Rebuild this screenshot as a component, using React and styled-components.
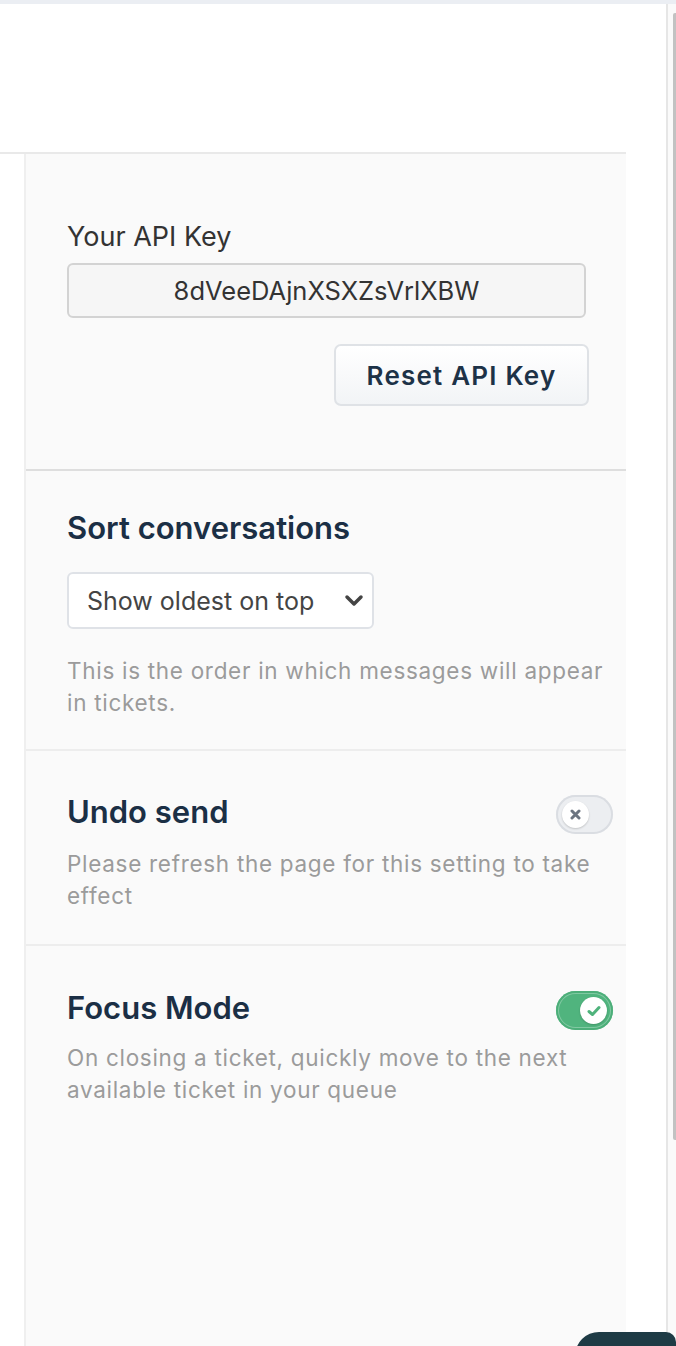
import React from "react";
import styled, { createGlobalStyle } from "styled-components";

const GlobalStyle = createGlobalStyle`
  html, body { margin: 0; padding: 0; background: #fff; }
  body { font-family: Inter, "Noto Sans", "Liberation Sans", sans-serif; -webkit-font-smoothing: antialiased; }
  * { box-sizing: border-box; }
`;

const Page = styled.div`
  position: relative;
  width: 676px;
  height: 1346px;
  display: flex;
  flex-direction: column;
  overflow: hidden;
  background: #fff;
`;

const TopStrip = styled.div`
  height: 4px;
  flex-shrink: 0;
  background: #ebeef3;
`;

const Body = styled.div`
  flex: 1;
  display: flex;
  min-height: 0;
`;

const Main = styled.div`
  width: 666px;
  display: flex;
  flex-direction: column;
`;

const Header = styled.div`
  height: 148px;
  flex-shrink: 0;
  background: #fff;
`;

const Content = styled.div`
  width: 626px;
  flex: 1;
  display: flex;
  padding-left: 24px;
  border-top: 2px solid #e9e9e9;
`;

const Panel = styled.div`
  flex: 1;
  display: flex;
  flex-direction: column;
  background: #fafafa;
  border-left: 2px solid #efefef;
`;

const Section = styled.section`
  padding: ${(p) => p.$top}px 13px ${(p) => p.$bottom}px 41px;
  border-bottom: ${(p) => (p.$last ? "none" : `2px solid ${p.$line || "#ededed"}`)};
`;

const Label = styled.div`
  font-size: 27px;
  line-height: 32px;
  color: #333;
`;

const KeyField = styled.div`
  margin-top: 10px;
  width: 519px;
  height: 55px;
  display: flex;
  align-items: center;
  justify-content: center;
  background: #f6f6f6;
  border: 2px solid #d3d3d3;
  border-radius: 6px;
  font-size: 25.5px;
  color: #333;
`;

const ButtonRow = styled.div`
  width: 522px;
  margin-top: 26px;
  display: flex;
  justify-content: flex-end;
`;

const Button = styled.button`
  width: 255px;
  height: 62px;
  border: 2px solid #dfe2e6;
  border-radius: 7px;
  background: linear-gradient(#ffffff, #f2f4f6);
  font-family: inherit;
  font-size: 26px;
  font-weight: 600;
  letter-spacing: 1.2px;
  color: #1d3247;
  padding: 0;
`;

const Heading = styled.h2`
  margin: 0;
  font-size: 31px;
  line-height: 38px;
  font-weight: 600;
  color: #1b2f45;
`;

const SelectBox = styled.div`
  margin-top: 25px;
  width: 307px;
  height: 57px;
  display: flex;
  align-items: center;
  justify-content: space-between;
  padding: 0 8px 0 18px;
  background: #fff;
  border: 2px solid #dfe2e7;
  border-radius: 6px;
  font-size: 25px;
  color: #444;
`;

const Help = styled.p`
  margin: ${(p) => p.$gap}px 0 0;
  max-width: 546px;
  font-size: 22.5px;
  line-height: 32px;
  letter-spacing: 0.7px;
  color: #9b9b9b;
`;

const ToggleRow = styled.div`
  display: flex;
  justify-content: space-between;
  align-items: flex-start;
`;

const Track = styled.div`
  margin-top: 2px;
  width: 57px;
  height: 39px;
  border-radius: 20px;
  display: flex;
  align-items: center;
  justify-content: ${(p) => (p.$on ? "flex-end" : "flex-start")};
  padding: 0 6px;
  background: ${(p) => (p.$on ? "#50b47e" : "#eceef1")};
  box-shadow: ${(p) =>
    p.$on
      ? "inset 0 0 0 2px #4cae79, inset 0 0 0 3px rgba(255,255,255,0.28)"
      : "inset 0 0 0 2px #dadde2"};
`;

const Knob = styled.div`
  width: 27px;
  height: 27px;
  border-radius: 50%;
  background: #fff;
  display: flex;
  align-items: center;
  justify-content: center;
  box-shadow: 0 1px 2px rgba(0, 0, 0, 0.18);
`;

const ScrollTrack = styled.div`
  width: 10px;
  display: flex;
  justify-content: flex-end;
  padding-top: 9px;
  background: #fafafa;
  border-left: 2px solid #e6e6e6;
`;

const Thumb = styled.div`
  width: 3px;
  height: 1127px;
  border-radius: 2px 0 0 2px;
  background: #c2c2c2;
`;

const Launcher = styled.div`
  position: absolute;
  left: 575px;
  top: 1332px;
  width: 101px;
  height: 40px;
  border-radius: 24px 10px 0 0;
  background: #1e3b45;
`;

const Toggle = ({ on }) => (
  <Track $on={on}>
    <Knob>
      {on ? (
        <svg width="14" height="12" viewBox="0 0 14 12">
          <path d="M2 6.5 L5.5 9.5 L12 2.5" fill="none" stroke="#4fb37c" strokeWidth="3" strokeLinecap="round" strokeLinejoin="round" />
        </svg>
      ) : (
        <svg width="11" height="11" viewBox="0 0 11 11">
          <path d="M2 2 L9 9 M9 2 L2 9" fill="none" stroke="#6b7480" strokeWidth="3" strokeLinecap="round" />
        </svg>
      )}
    </Knob>
  </Track>
);

export default function App() {
  return (
    <>
      <GlobalStyle />
      <Page>
        <TopStrip />
        <Body>
          <Main>
            <Header />
            <Content>
              <Panel>
                <Section $top={67} $bottom={63} $line="#dedede">
                  <Label>Your API Key</Label>
                  <KeyField>8dVeeDAjnXSXZsVrlXBW</KeyField>
                  <ButtonRow>
                    <Button>Reset API Key</Button>
                  </ButtonRow>
                </Section>
                <Section $top={38} $bottom={30}>
                  <Heading>Sort conversations</Heading>
                  <SelectBox>
                    <span>Show oldest on top</span>
                    <svg width="20" height="14" viewBox="0 0 20 14">
                      <path d="M3 3 L10 10 L17 3" fill="none" stroke="#444" strokeWidth="3.5" strokeLinecap="round" strokeLinejoin="round" />
                    </svg>
                  </SelectBox>
                  <Help $gap={26}>This is the order in which messages will appear in tickets.</Help>
                </Section>
                <Section $top={42} $bottom={32}>
                  <ToggleRow>
                    <Heading>Undo send</Heading>
                    <Toggle on={false} />
                  </ToggleRow>
                  <Help $gap={14}>Please refresh the page for this setting to take effect</Help>
                </Section>
                <Section $top={43} $bottom={32} $last>
                  <ToggleRow>
                    <Heading>Focus Mode</Heading>
                    <Toggle on />
                  </ToggleRow>
                  <Help $gap={12}>On closing a ticket, quickly move to the next available ticket in your queue</Help>
                </Section>
              </Panel>
            </Content>
          </Main>
          <ScrollTrack>
            <Thumb />
          </ScrollTrack>
        </Body>
        <Launcher />
      </Page>
    </>
  );
}
